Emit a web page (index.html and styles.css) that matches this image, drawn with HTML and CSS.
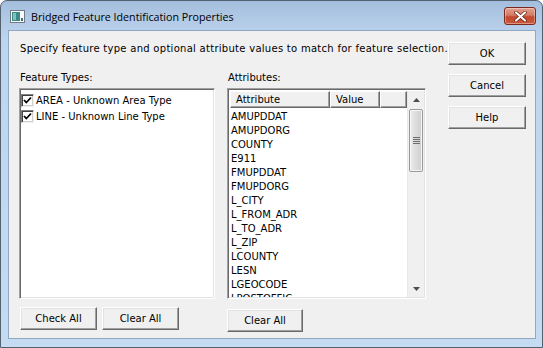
FILE: index.html
```html
<!DOCTYPE html>
<html lang="en">
<head>
    <meta charset="UTF-8">
    <title>Bridged Feature Identification Properties</title>
    <link rel="stylesheet" href="styles.css">
</head>
<body>

    <!-- Dialog Window -->
    <div class="window">
        <div class="title-bar">
            <svg class="title-icon" width="15" height="13" viewBox="0 0 15 13">
                <rect x="0.5" y="0.5" width="14" height="12" fill="#fafafa" stroke="#6d7b86"/>
                <rect x="2" y="2" width="8" height="9" fill="#3b8b86"/>
                <rect x="3" y="3" width="3" height="7" fill="#7fc2b7"/>
                <rect x="11" y="8" width="2" height="3" fill="#4a6b7a"/>
            </svg>
            <span class="title-text">Bridged Feature Identification Properties</span>
            <button class="close-button">
                <svg width="13" height="11" viewBox="0 0 13 11">
                    <path d="M2 1.5 L11 9.5 M11 1.5 L2 9.5" stroke="#5a1a10" stroke-width="3.4" stroke-linecap="round"/>
                    <path d="M2 1.5 L11 9.5 M11 1.5 L2 9.5" stroke="#ffffff" stroke-width="2.2" stroke-linecap="round"/>
                </svg>
            </button>
        </div>

        <div class="client">
            <div class="content">
                <p class="description">Specify feature type and optional attribute values to match for feature selection.</p>

                <div class="panels">
                    <!-- Feature Types -->
                    <div class="panel feature-panel">
                        <label class="panel-label">Feature Types:</label>
                        <div class="list-box feature-list">
                            <div class="check-row"><span class="check-box"><svg width="9" height="9" viewBox="0 0 9 9"><path d="M1 4 L3.3 6.5 L8 1.5" stroke="#000" stroke-width="1.8" fill="none"/></svg></span>AREA - Unknown Area Type</div>
                            <div class="check-row"><span class="check-box"><svg width="9" height="9" viewBox="0 0 9 9"><path d="M1 4 L3.3 6.5 L8 1.5" stroke="#000" stroke-width="1.8" fill="none"/></svg></span>LINE - Unknown Line Type</div>
                        </div>
                        <div class="button-row">
                            <button class="dlg-button">Check All</button>
                            <button class="dlg-button">Clear All</button>
                        </div>
                    </div>

                    <!-- Attributes -->
                    <div class="panel attr-panel">
                        <label class="panel-label">Attributes:</label>
                        <div class="list-box attr-list">
                            <div class="attr-body">
                                <div class="list-header">
                                    <span class="col col-attr">Attribute</span>
                                    <span class="col col-value">Value</span>
                                    <span class="col col-rest"></span>
                                </div>
                                <div class="attr-rows">
                                    <div>AMUPDDAT</div>
                                    <div>AMUPDORG</div>
                                    <div>COUNTY</div>
                                    <div>E911</div>
                                    <div>FMUPDDAT</div>
                                    <div>FMUPDORG</div>
                                    <div>L_CITY</div>
                                    <div>L_FROM_ADR</div>
                                    <div>L_TO_ADR</div>
                                    <div>L_ZIP</div>
                                    <div>LCOUNTY</div>
                                    <div>LESN</div>
                                    <div>LGEOCODE</div>
                                    <div>LPOSTOFFIC</div>
                                </div>
                            </div>
                            <div class="scrollbar">
                                <div class="arrow">
                                    <svg width="7" height="4" viewBox="0 0 7 4"><path d="M0 4 L3.5 0 L7 4 Z" fill="#4d4d4d"/></svg>
                                </div>
                                <div class="track">
                                    <div class="thumb">
                                        <svg width="7" height="7" viewBox="0 0 7 7"><path d="M0 0.5 H7 M0 2.5 H7 M0 4.5 H7 M0 6.5 H7" stroke="#6c6c6c" stroke-width="1"/></svg>
                                    </div>
                                </div>
                                <div class="arrow">
                                    <svg width="7" height="4" viewBox="0 0 7 4"><path d="M0 0 L3.5 4 L7 0 Z" fill="#4d4d4d"/></svg>
                                </div>
                            </div>
                        </div>
                        <div class="button-row attr-buttons">
                            <button class="dlg-button">Clear All</button>
                        </div>
                    </div>
                </div>
            </div>

            <!-- Dialog Buttons -->
            <div class="side-buttons">
                <button class="dlg-button">OK</button>
                <button class="dlg-button">Cancel</button>
                <button class="dlg-button">Help</button>
            </div>
        </div>
    </div>

</body>
</html>
```

FILE: styles.css
```css
/* General Styles */
* {
    margin: 0;
    padding: 0;
    box-sizing: border-box;
}

body {
    width: 543px;
    height: 348px;
    background: #ffffff;
    font-family: 'DejaVu Sans', Tahoma, sans-serif;
    font-size: 10px;
    color: #000;
    overflow: hidden;
}

/* Window Frame */
.window {
    width: 543px;
    height: 348px;
    border: 1px solid #54616f;
    border-radius: 7px 7px 0 0;
    background: linear-gradient(#a3bedd 0px, #b4cce8 22px, #bdd5ee 40px, #c4dbf2 100%);
    padding: 0 6px 8px 7px;
    display: flex;
    flex-direction: column;
}

.title-bar {
    height: 29px;
    display: flex;
    align-items: center;
    padding: 0 0 0 2px;
}

.title-icon {
    margin-top: 2px;
}

.title-text {
    font-family: 'Open Sans', sans-serif;
    font-size: 10.7px;
    margin-left: 6px;
    margin-top: 2px;
    color: #000;
}

.close-button {
    margin-left: auto;
    margin-top: 1px;
    width: 32px;
    height: 18px;
    border: 1px solid #7b2a1f;
    border-radius: 3px;
    background: linear-gradient(#e3a290 0%, #d47b63 45%, #c2472f 55%, #cc5a3c 100%);
    box-shadow: inset 0 0 0 1px rgba(255, 255, 255, 0.35);
    display: flex;
    align-items: center;
    justify-content: center;
}

/* Client Area */
.client {
    flex: 1;
    background: #f0f0f0;
    border: 1px solid #8ea7c2;
    display: flex;
    padding: 0 9px 0 10px;
}

.content {
    flex: 1;
}

.description {
    margin-top: 11px;
    line-height: 14px;
    padding-left: 1px;
    letter-spacing: 0.28px;
    white-space: nowrap;
}

.panels {
    display: flex;
    gap: 12px;
    margin-top: 15px;
}

.panel {
    display: flex;
    flex-direction: column;
}

.panel-label {
    line-height: 14px;
    padding-left: 1px;
}

/* Sunken list boxes */
.list-box {
    margin-top: 3px;
    height: 211px;
    background: #fff;
    border: 1px solid;
    border-color: #a0a0a0 #ffffff #ffffff #a0a0a0;
    box-shadow: inset 1px 1px 0 #696969, inset -1px -1px 0 #e3e3e3;
}

.feature-panel {
    width: 196px;
}

.feature-list {
    padding: 3px 2px 3px 1px;
}

.check-row {
    display: flex;
    align-items: center;
    height: 16px;
    white-space: nowrap;
}

.check-box {
    width: 13px;
    height: 13px;
    margin-right: 2px;
    background: #fff;
    border: 1px solid;
    border-color: #808080 #f0f0f0 #f0f0f0 #808080;
    box-shadow: inset 1px 1px 0 #404040, inset -1px -1px 0 #d4d0c8;
    display: flex;
    align-items: center;
    justify-content: center;
}

/* Attribute list view */
.attr-panel {
    width: 199px;
}

.attr-list {
    display: flex;
    padding: 2px 1px 1px 2px;
    overflow: hidden;
}

.attr-body {
    flex: 1;
    overflow: hidden;
}

.list-header {
    display: flex;
    height: 17px;
}

.col {
    height: 17px;
    line-height: 15px;
    padding-left: 5px;
    background: #f0f0f0;
    border: 1px solid;
    border-color: #ffffff #696969 #696969 #ffffff;
    box-shadow: inset -1px -1px 0 #a0a0a0;
}

.col-attr {
    width: 100px;
}

.col-value {
    width: 50px;
}

.col-rest {
    flex: 1;
}

.attr-rows {
    padding: 2px 0 0 1px;
}

.attr-rows div {
    height: 14px;
    line-height: 14px;
}

.scrollbar {
    width: 17px;
    display: flex;
    flex-direction: column;
    background: #f0f0f0;
    border-left: 1px solid #e8e8e8;
}

.arrow {
    height: 17px;
    display: flex;
    align-items: center;
    justify-content: center;
}

.track {
    flex: 1;
    padding: 1px 1px 0 1px;
}

.thumb {
    height: 63px;
    border: 1px solid #9a9a9a;
    border-radius: 2px;
    background: linear-gradient(90deg, #ececec, #dcdcdc 50%, #cfcfcf);
    box-shadow: inset 0 0 0 1px #f6f6f6;
    display: flex;
    align-items: center;
    justify-content: center;
}

/* Buttons */
.button-row {
    display: flex;
    gap: 5px;
    margin-top: 8px;
    padding-left: 1px;
}

.attr-buttons {
    margin-top: 10px;
    padding-left: 0;
}

.dlg-button {
    width: 77px;
    height: 23px;
    font-family: 'DejaVu Sans', Tahoma, sans-serif;
    font-size: 10px;
    color: #000;
    background: #f0f0f0;
    border: 1px solid;
    border-color: #ffffff #696969 #696969 #ffffff;
    box-shadow: inset -1px -1px 0 #a0a0a0, inset 1px 1px 0 #e3e3e3;
}

.attr-buttons .dlg-button {
    width: 76px;
}

.side-buttons {
    display: flex;
    flex-direction: column;
    gap: 9px;
    padding-top: 11px;
}

.side-buttons .dlg-button {
    width: 78px;
}
```
